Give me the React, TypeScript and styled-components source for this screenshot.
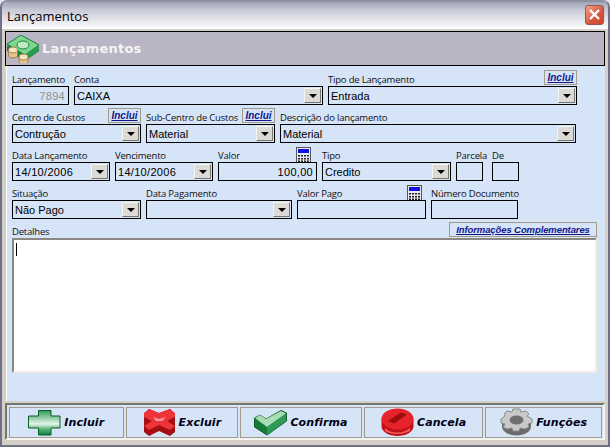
import styled, { createGlobalStyle } from 'styled-components';

const Global = createGlobalStyle`
  html, body {
    margin: 0;
    padding: 0;
    background: #e4e4ea;
  }
  * {
    box-sizing: border-box;
  }
`;

const Window = styled.div`
  width: 610px;
  height: 447px;
  background: #d4d0c8;
  border: 2px solid #6f7186;
  border-top-color: #8e90a4;
  border-radius: 7px 7px 0 0;
  display: flex;
  flex-direction: column;
  overflow: hidden;
`;

const TitleBar = styled.div`
  height: 27px;
  flex-shrink: 0;
  display: flex;
  align-items: center;
  justify-content: space-between;
  padding: 0 4px 0 5px;
  background: linear-gradient(#a2a3b5 0%, #c9cad6 30%, #f2f2f5 85%, #ffffff 100%);
`;

const TitleText = styled.span`
  font: 13px 'Open Sans', sans-serif;
  color: #000008;
`;

const CloseButton = styled.div`
  width: 19px;
  height: 20px;
  margin-top: -2px;
  border: 1px solid #8f5a50;
  border-radius: 3px;
  background: linear-gradient(135deg, #efa48e, #d9543c 60%, #c8452e);
  display: flex;
  align-items: center;
  justify-content: center;
`;

const Body = styled.div`
  flex: 1;
  display: flex;
  flex-direction: column;
  padding: 2px 3px 5px 3px;
  min-height: 0;
`;

const Banner = styled.div`
  height: 35px;
  flex-shrink: 0;
  background: #b9b5c4;
  border: 1px solid #000;
  display: flex;
  align-items: center;
  gap: 1px;
`;

const BannerText = styled.span`
  font: bold 13px 'DejaVu Sans', sans-serif;
  color: #f4f4f4;
  letter-spacing: 0.2px;
`;

const Form = styled.div`
  flex: 1;
  background: #d6e4f7;
  padding: 1px 8px 0 5px;
  margin: 0 0 1px 1px;
  border-left: 1px solid #fff;
  display: flex;
  flex-direction: column;
  min-height: 0;
`;

const Row = styled.div`
  height: 38px;
  flex-shrink: 0;
  display: flex;
  gap: 5px;
  align-items: flex-end;
`;

const Field = styled.div<{ $w: number; $ml?: number }>`
  width: ${(p) => p.$w}px;
  margin-left: ${(p) => p.$ml || 0}px;
  flex-shrink: 0;
  display: flex;
  flex-direction: column;
`;

const LabelRow = styled.div<{ $h?: number }>`
  display: flex;
  align-items: flex-end;
  justify-content: space-between;
  height: ${(p) => p.$h || 17}px;
  flex-shrink: 0;
`;

const Label = styled.label`
  font: 9.5px 'Open Sans', sans-serif;
  letter-spacing: -0.2px;
  color: #101010;
  line-height: 15px;
  margin-bottom: -1px;
  white-space: nowrap;
`;

const LinkBox = styled.div<{ $wide?: boolean }>`
  width: ${(p) => (p.$wide ? 148 : 33)}px;
  height: 15px;
  border: 1px solid #a09a8c;
  margin-bottom: 1px;
  font: italic bold ${(p) => (p.$wide ? '9.5px' : '10px')} 'Liberation Sans', sans-serif;
  letter-spacing: ${(p) => (p.$wide ? '-0.1px' : '0')};
  color: #14148c;
  text-decoration: underline;
  line-height: 13px;
  text-align: center;
  white-space: nowrap;
`;

const CalcHolder = styled.span<{ $mr: number }>`
  display: block;
  height: 15px;
  margin-right: ${(p) => p.$mr}px;
`;

const Box = styled.div<{ $right?: boolean; $disabled?: boolean; $digits?: boolean }>`
  height: 19px;
  border: 1px solid #000;
  display: flex;
  align-items: center;
  justify-content: ${(p) => (p.$right ? 'flex-end' : 'flex-start')};
  padding: 0 ${(p) => (p.$right ? 3 : 2)}px;
  font: 11px 'Liberation Sans', sans-serif;
  letter-spacing: ${(p) => (p.$digits ? '0.3px' : '0')};
  color: ${(p) => (p.$disabled ? '#8f8f8f' : '#000')};
  white-space: nowrap;
`;

const SelectBox = styled(Box)`
  justify-content: space-between;
  padding: 0 1px 0 2px;
`;

const Arrow = styled.span`
  width: 17px;
  height: 15px;
  background: #dcdad4;
  border: 1px solid;
  border-color: #f4f4f0 #77756f #77756f #f4f4f0;
  display: flex;
  align-items: center;
  justify-content: center;
  &::after {
    content: '';
    border-left: 4px solid transparent;
    border-right: 4px solid transparent;
    border-top: 4px solid #000;
  }
`;

const TextArea = styled.div`
  height: 135px;
  flex-shrink: 0;
  background: #fff;
  border: 2px solid;
  border-color: #8a8880 #efede6 #efede6 #8a8880;
  padding: 3px 2px;
`;

const Caret = styled.div`
  width: 1px;
  height: 13px;
  background: #000;
`;

const Footer = styled.div`
  height: 37px;
  flex-shrink: 0;
  border: 2px solid;
  border-color: #77756f #f4f4f0 #f4f4f0 #77756f;
  background: #d6e4f7;
  margin-top: 1px;
  display: flex;
  gap: 2px;
  padding: 2px 1px 1px 2px;
`;

const ActionButton = styled.div<{ $w: number }>`
  width: ${(p) => p.$w}px;
  height: 31px;
  border: 1px solid #a09a8c;
  display: flex;
  align-items: center;
  justify-content: center;
  gap: 3px;
  font: italic bold 11px 'DejaVu Sans', sans-serif;
  color: #000018;
  letter-spacing: 0.1px;
`;

const MoneyIcon = () => (
  <svg width="35" height="28" viewBox="0 0 35 28">
    <path d="M1 11 L15 1 L33 11 L33 16 L19 26 L1 16 Z" fill="#17813c" />
    <path d="M1 9 L15 0 L33 10 L19 20 Z" fill="#7fd68f" stroke="#17813c" />
    <ellipse cx="17" cy="10" rx="6" ry="4" fill="#bfeec6" stroke="#17813c" />
    <path d="M19 20 L33 10 L33 15 L19 25 Z" fill="#2c9c50" />
    <path d="M2.5 15 V20 A4.5 3 0 0 0 11.5 20 V15" fill="#e8c48a" stroke="#a08050" />
    <ellipse cx="7" cy="15" rx="4.5" ry="3" fill="#f6e2bc" stroke="#a08050" />
    <path d="M13 22 V26 A4.5 3 0 0 0 22 26 V22" fill="#e8c48a" stroke="#a08050" />
    <ellipse cx="17.5" cy="22" rx="4.5" ry="3" fill="#f6e2bc" stroke="#a08050" />
  </svg>
);

const CalcIcon = () => (
  <svg width="15" height="15" viewBox="0 0 15 15" style={{ display: 'block' }}>
    <rect x="0.5" y="0.5" width="14" height="15" fill="#e8e8f0" stroke="#555" />
    <rect x="2" y="2" width="11" height="4" fill="#1010e8" />
    <path d="M2 8h2v1.5H2zM5 8h2v1.5H5zM8 8h2v1.5H8zM11 8h2v1.5h-2zM2 11h2v1.5H2zM5 11h2v1.5H5zM8 11h2v1.5H8zM11 11h2v1.5h-2zM2 13.5h2V15H2zM5 13.5h2V15H5zM8 13.5h2V15H8zM11 13.5h2V15h-2z" fill="#222" />
  </svg>
);

const PlusIcon = () => (
  <svg width="33" height="26" viewBox="0 0 33 26">
    <defs>
      <linearGradient id="plus" x1="0" y1="0" x2="0" y2="1">
        <stop offset="0" stopColor="#2f9a55" />
        <stop offset="0.55" stopColor="#e6f5ea" />
        <stop offset="0.75" stopColor="#5db67d" />
        <stop offset="1" stopColor="#11803c" />
      </linearGradient>
    </defs>
    <path d="M10.5 .5 H23 V6 H32 V18 H23 V25 H10.5 V18 H.5 V6 H10.5 Z" fill="url(#plus)" stroke="#0c5c2a" />
  </svg>
);

const CrossIcon = () => (
  <svg width="33" height="29" viewBox="0 0 33 29">
    <path d="M1 6 L6 1 L16 5 L27 1 L32 6 L32 24 L27 28 L16 23 L6 28 L1 24 Z" fill="#a30f14" />
    <path d="M1 5 L6 1 L16 5 L27 1 L32 5 L32 9 L24 13 L32 18 L27 22 L16 17 L6 22 L1 18 L9 13 L1 9 Z" fill="#ee3438" />
    <path d="M10 9 L16 11 L23 9 L19 13 L13 13 Z" fill="#f99" />
  </svg>
);

const CheckIcon = () => (
  <svg width="33" height="26" viewBox="0 0 33 26">
    <path d="M.5 8 L6 5 L12 9 L27 .5 L32.5 3 L32.5 11 L13 25 L.5 17 Z" fill="#157a3a" stroke="#0c5c2a" />
    <path d="M1 8 L6 5 L12 9 L27 1 L32 3.5 L13 17 Z" fill="#a7dcb5" />
    <path d="M13 17 L32 4 L32 11 L13 25 Z" fill="#2f9a55" />
  </svg>
);

const StopIcon = () => (
  <svg width="33" height="29" viewBox="0 0 33 29">
    <path d="M.5 11 V18 C.5 24 8 28 16.5 28 C25 28 32.5 24 32.5 18 V11 Z" fill="#c01216" />
    <path d="M4 20 C10 26 22 26 29 20 L29 23 C22 27 10 27 4 23 Z" fill="#ef5a5c" />
    <ellipse cx="16.5" cy="11" rx="16" ry="10.5" fill="#e62328" />
    <path d="M7 13 L20 4.5 L26 6.5 L13 15.5 Z" fill="#9a0d11" />
  </svg>
);

const GearIcon = () => (
  <svg width="33" height="29" viewBox="0 0 33 29">
    <path d="M2 14 V18 C2 24 9 27.5 16.5 27.5 C24 27.5 31 24 31 18 V14 Z" fill="#6c6c6c" />
    <path
      d="M13 1 H20 L21 4 L26 3 L29 6 L27 8 L32 11 L32 15 L28 16 L29 19 L25 21 L20 20 L19 23 H13 L12 20 L7 21 L3 19 L5 16 L1 15 L1 11 L5 8 L4 6 L7 3 L12 4 Z"
      fill="#c9c9c9"
      stroke="#8a8a8a"
    />
    <ellipse cx="16.5" cy="12" rx="7" ry="4.5" fill="#6f6f6f" />
  </svg>
);

const App = () => (
  <>
    <Global />
    <Window>
      <TitleBar>
        <TitleText>Lançamentos</TitleText>
        <CloseButton>
          <svg width="13" height="13" viewBox="0 0 13 13">
            <path d="M2 2 L11 11 M11 2 L2 11" stroke="#fff" strokeWidth="2.4" />
          </svg>
        </CloseButton>
      </TitleBar>
      <Body>
        <Banner>
          <MoneyIcon />
          <BannerText>Lançamentos</BannerText>
        </Banner>
        <Form>
          <Row>
            <Field $w={57}>
              <LabelRow><Label>Lançamento</Label></LabelRow>
              <Box $right $disabled $digits>7894</Box>
            </Field>
            <Field $w={249}>
              <LabelRow><Label>Conta</Label></LabelRow>
              <SelectBox>CAIXA<Arrow /></SelectBox>
            </Field>
            <Field $w={249}>
              <LabelRow><Label>Tipo de Lançamento</Label><LinkBox>Inclui</LinkBox></LabelRow>
              <SelectBox>Entrada<Arrow /></SelectBox>
            </Field>
          </Row>
          <Row>
            <Field $w={129}>
              <LabelRow><Label>Centro de Custos</Label><LinkBox>Inclui</LinkBox></LabelRow>
              <SelectBox>Contrução<Arrow /></SelectBox>
            </Field>
            <Field $w={129}>
              <LabelRow><Label>Sub-Centro de Custos</Label><LinkBox>Inclui</LinkBox></LabelRow>
              <SelectBox>Material<Arrow /></SelectBox>
            </Field>
            <Field $w={296}>
              <LabelRow><Label>Descrição do lançamento</Label></LabelRow>
              <SelectBox>Material<Arrow /></SelectBox>
            </Field>
          </Row>
          <Row>
            <Field $w={98}>
              <LabelRow><Label>Data Lançamento</Label></LabelRow>
              <SelectBox $digits>14/10/2006<Arrow /></SelectBox>
            </Field>
            <Field $w={98}>
              <LabelRow><Label>Vencimento</Label></LabelRow>
              <SelectBox $digits>14/10/2006<Arrow /></SelectBox>
            </Field>
            <Field $w={99}>
              <LabelRow><Label>Valor</Label><CalcHolder $mr={6}><CalcIcon /></CalcHolder></LabelRow>
              <Box $right $digits>100,00</Box>
            </Field>
            <Field $w={129}>
              <LabelRow><Label>Tipo</Label></LabelRow>
              <SelectBox>Credito<Arrow /></SelectBox>
            </Field>
            <Field $w={27}>
              <LabelRow><Label>Parcela</Label></LabelRow>
              <Box />
            </Field>
            <Field $w={27} $ml={4}>
              <LabelRow><Label>De</Label></LabelRow>
              <Box />
            </Field>
          </Row>
          <Row>
            <Field $w={129}>
              <LabelRow><Label>Situação</Label></LabelRow>
              <SelectBox>Não Pago<Arrow /></SelectBox>
            </Field>
            <Field $w={146}>
              <LabelRow><Label>Data Pagamento</Label></LabelRow>
              <SelectBox><span /><Arrow /></SelectBox>
            </Field>
            <Field $w={129}>
              <LabelRow><Label>Valor Pago</Label><CalcHolder $mr={4}><CalcIcon /></CalcHolder></LabelRow>
              <Box />
            </Field>
            <Field $w={87}>
              <LabelRow><Label>Número Documento</Label></LabelRow>
              <Box />
            </Field>
          </Row>
          <LabelRow $h={19}>
            <Label>Detalhes</Label>
            <LinkBox $wide>Informações Complementares</LinkBox>
          </LabelRow>
          <TextArea><Caret /></TextArea>
        </Form>
        <Footer>
          <ActionButton $w={115}><PlusIcon />Incluir</ActionButton>
          <ActionButton $w={113}><CrossIcon />Excluir</ActionButton>
          <ActionButton $w={122}><CheckIcon />Confirma</ActionButton>
          <ActionButton $w={120}><StopIcon />Cancela</ActionButton>
          <ActionButton $w={117}><GearIcon />Funções</ActionButton>
        </Footer>
      </Body>
    </Window>
  </>
);

export default App;
